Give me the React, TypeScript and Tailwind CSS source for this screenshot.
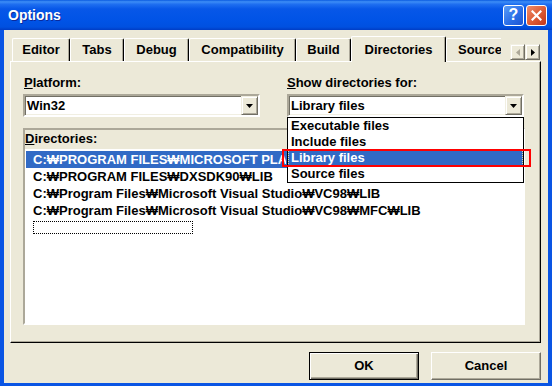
import React from 'react'

const raised =
  'border border-t-[#F1EFE2] border-l-[#F1EFE2] border-r-[#716F64] border-b-[#716F64] shadow-[inset_1px_1px_0_#fff,inset_-1px_-1px_0_#ACA899] bg-[#ECE9D8]'
const sunken =
  'border-2 border-t-[#ACA899] border-l-[#ACA899] border-r-white border-b-white shadow-[inset_1px_1px_0_#716F64,inset_-1px_-1px_0_#F1EFE2]'

const tabs = [
  { label: 'Editor', cls: 'w-[58px]' },
  { label: 'Tabs', cls: 'w-[54px]' },
  { label: 'Debug', cls: 'w-[65px]' },
  { label: 'Compatibility', cls: 'w-[107px]' },
  { label: 'Build', cls: 'w-[55px]' },
]

const dirs = [
  'C:₩PROGRAM FILES₩MICROSOFT PLATFORM SDK₩LIB',
  'C:₩PROGRAM FILES₩DXSDK90₩LIB',
  'C:₩Program Files₩Microsoft Visual Studio₩VC98₩LIB',
  'C:₩Program Files₩Microsoft Visual Studio₩VC98₩MFC₩LIB',
]

const options = ['Executable files', 'Include files', 'Library files', 'Source files']

const DownArrow = () => (
  <svg width="7" height="4" viewBox="0 0 7 4">
    <path d="M0 0h7L3.5 4z" fill="#000" />
  </svg>
)

const Combo = ({ value }: { value: string }) => (
  <div className={`h-[23px] flex items-center bg-white ${sunken}`}>
    <span className="flex-1 pl-[2px] pt-[1px] text-[13px] font-bold text-black leading-[16px]">{value}</span>
    <div className={`w-[17px] h-[19px] flex items-center justify-center ${raised}`}>
      <DownArrow />
    </div>
  </div>
)

export default function App() {
  return (
    <div className="w-[552px] h-[386px] flex flex-col bg-[#0A55E4] font-['Liberation_Sans',Arial,sans-serif] select-none">
      {/* title bar */}
      <div className="h-[30px] shrink-0 flex items-center pl-[8px] pr-[5px] bg-[linear-gradient(180deg,#0A5BE0_0%,#3D8DF6_6%,#1F6FF0_14%,#0757E8_30%,#0053E6_70%,#0050E0_90%,#003DC5_100%)]">
        <span className="text-white text-[14px] font-bold [text-shadow:1px_1px_0_#0A2A9C]">Options</span>
        <div className="ml-auto flex items-center gap-[2px]">
          <div className="w-[21px] h-[21px] rounded-[3px] border border-white bg-[linear-gradient(135deg,#5B9DF7_0%,#2B6FE8_55%,#1E55D2_100%)] flex items-center justify-center text-white text-[16px] font-bold leading-none">
            ?
          </div>
          <div className="w-[21px] h-[21px] rounded-[3px] border border-white bg-[linear-gradient(135deg,#EE8D6C_0%,#DC5A33_55%,#C2361A_100%)] flex items-center justify-center">
            <svg width="11" height="11" viewBox="0 0 11 11">
              <path d="M1.5 1.5l8 8M9.5 1.5l-8 8" stroke="#fff" strokeWidth="2.2" strokeLinecap="square" />
            </svg>
          </div>
        </div>
      </div>

      <div className="flex-1 mx-[4px] mb-[3px] bg-[#ECE9D8] flex flex-col pt-[6px]">
        {/* tab strip */}
        <div className="h-[25px] ml-[6px] mr-[7px] pl-[2px] flex items-end relative z-10">
          {tabs.map(t => (
            <div
              key={t.label}
              className={`${t.cls} h-[23px] flex items-center justify-center text-[13px] font-bold text-black border-t border-l border-t-white border-l-white border-r border-r-black shadow-[inset_-1px_0_0_#ACA899] rounded-t-[2px]`}
            >
              {t.label}
            </div>
          ))}
          <div className="w-[95px] h-[26px] -mb-[1px] flex items-center justify-center text-[13px] font-bold text-black bg-[#ECE9D8] border-t border-l border-t-white border-l-white border-r border-r-black shadow-[inset_-1px_0_0_#ACA899] rounded-t-[2px]">
            Directories
          </div>
          <div className="w-[55px] h-[23px] flex items-center pl-[11px] overflow-hidden whitespace-nowrap text-[13px] font-bold text-black border-t border-l border-t-white border-l-white rounded-tl-[2px]">
            Source
          </div>
          <div className="ml-auto mr-[1px] mb-[1px] flex">
            <div className={`w-[15px] h-[16px] flex items-center justify-center ${raised}`}>
              <svg width="4" height="7" viewBox="0 0 4 7">
                <path d="M4 0v7L0 3.5z" fill="#ACA899" />
              </svg>
            </div>
            <div className={`w-[15px] h-[16px] flex items-center justify-center ${raised}`}>
              <svg width="4" height="7" viewBox="0 0 4 7">
                <path d="M0 0v7L4 3.5z" fill="#000" />
              </svg>
            </div>
          </div>
        </div>

        {/* tab panel */}
        <div className="h-[282px] ml-[6px] mr-[7px] border border-t-white border-l-white border-r-black border-b-black shadow-[inset_-1px_-1px_0_#ACA899] px-[12px] pt-[13px] relative">
          <div className="grid grid-cols-[237px_237px] gap-x-[27px]">
            <div>
              <div className="h-[16px] leading-[16px] text-[13px] font-bold text-black pl-[1px]">
                <u>P</u>latform:
              </div>
              <div className="mt-[3px]">
                <Combo value="Win32" />
              </div>
            </div>
            <div>
              <div className="h-[16px] leading-[16px] text-[13px] font-bold text-black">
                <u>S</u>how directories for:
              </div>
              <div className="mt-[3px] relative z-20">
                <Combo value="Library files" />
                <div className="absolute left-0 top-[23px] w-full h-[66px] border border-black bg-white">
                  {options.map(o =>
                    o === 'Library files' ? (
                      <div
                        key={o}
                        className="h-[16px] leading-[14px] pl-[2px] bg-[#316AC5] text-white text-[13px] font-bold border border-dotted border-[#E2D9A4]"
                      >
                        {o}
                      </div>
                    ) : (
                      <div key={o} className="h-[16px] leading-[16px] pl-[3px] text-black text-[13px] font-bold">
                        {o}
                      </div>
                    )
                  )}
                </div>
                <div className="absolute -left-[5px] top-[55px] w-[249px] h-[18px] border-2 border-[#FF0000]" />
              </div>
            </div>
          </div>

          {/* directories list */}
          <div className={`mt-[11px] w-[502px] h-[197px] flex flex-col ${sunken}`}>
            <div className="h-[19px] shrink-0 bg-[#ECE9D8] pt-[1px] leading-[16px] text-[13px] font-bold text-black">
              <u>D</u>irectories:
            </div>
            <div className="flex-1 bg-white pt-[2px] overflow-hidden">
              {dirs.map((d, i) => (
                <div
                  key={d}
                  className={`h-[17px] leading-[17px] mx-[1px] pl-[7px] text-[13px] font-bold ${
                    i === 0 ? 'bg-[#316AC5] text-white' : 'text-black'
                  }`}
                >
                  <div className={`whitespace-nowrap overflow-hidden ${i === 0 ? 'w-[253px]' : ''}`}>{d}</div>
                </div>
              ))}
              <div className="h-[17px] pt-[2px] pl-[8px]">
                <div className="w-[160px] h-[13px] border border-dotted border-black" />
              </div>
            </div>
          </div>
        </div>

        {/* buttons */}
        <div className="flex justify-end gap-[12px] mr-[7px] mt-[9px]">
          <div className="w-[110px] h-[28px] flex items-center justify-center border border-black shadow-[inset_1px_1px_0_#fff,inset_-1px_-1px_0_#716F64,inset_-2px_-2px_0_#ACA899] text-[13px] font-bold text-black">
            OK
          </div>
          <div className="w-[110px] h-[28px] flex items-center justify-center border border-t-white border-l-white border-r-[#716F64] border-b-[#716F64] shadow-[inset_-1px_-1px_0_#ACA899] text-[13px] font-bold text-black">
            Cancel
          </div>
        </div>
      </div>
    </div>
  )
}
